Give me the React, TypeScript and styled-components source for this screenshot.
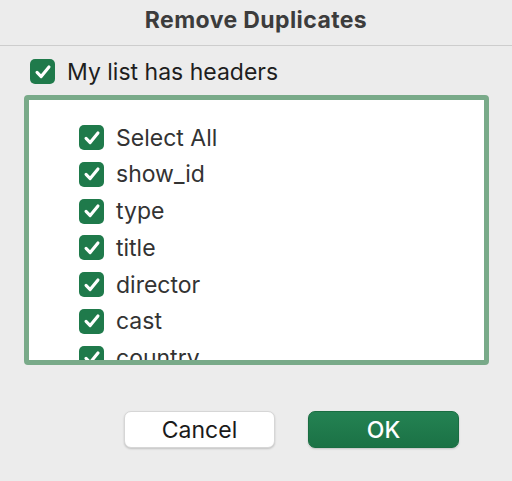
import React, { useState } from 'react';
import styled, { createGlobalStyle } from 'styled-components';

const GlobalStyle = createGlobalStyle`
  html, body {
    margin: 0;
    padding: 0;
    background: #ececec;
  }
  body {
    font-family: Inter, "Liberation Sans", Arial, sans-serif;
  }
`;

const Dialog = styled.div`
  width: 512px;
  height: 481px;
  background: #ececec;
  display: flex;
  flex-direction: column;
  overflow: hidden;
`;

const TitleBar = styled.div`
  height: 46px;
  box-sizing: border-box;
  border-bottom: 1px solid #cdcdcd;
  display: flex;
  align-items: center;
  justify-content: center;
  font-size: 23px;
  font-weight: 700;
  letter-spacing: 0.4px;
  color: #3c3c3c;
  padding-bottom: 5px;
`;

const HeaderRow = styled.label`
  display: flex;
  align-items: center;
  gap: 12px;
  padding: 13px 0 0 30px;
  height: 25px;
  font-size: 23px;
  color: #1e1e1e;
  cursor: default;
`;

const ListBox = styled.div`
  margin: 11px 0 0 24px;
  width: 465px;
  height: 270px;
  box-sizing: border-box;
  border: 5px solid #79aa89;
  border-radius: 4px;
  background: #ffffff;
  overflow: hidden;
  padding: 25px 0 0 50px;
`;

const Item = styled.label`
  display: flex;
  align-items: center;
  gap: 12px;
  height: 25px;
  margin-bottom: 11.8px;
  font-size: 23px;
  color: #333333;
`;

const Box = styled.span<{ $checked: boolean }>`
  width: 25px;
  height: 25px;
  flex: none;
  box-sizing: border-box;
  border-radius: 5px;
  background: ${p => (p.$checked ? '#1f7a4b' : '#ffffff')};
  border: ${p => (p.$checked ? 'none' : '1px solid #b8b8b8')};
  display: flex;
  align-items: center;
  justify-content: center;
`;

const Buttons = styled.div`
  display: flex;
  gap: 33px;
  padding: 46px 0 0 124px;
`;

const Button = styled.button<{ $primary?: boolean }>`
  width: 151px;
  height: 37px;
  border-radius: 7px;
  font-family: Inter, "Liberation Sans", Arial, sans-serif;
  font-size: 23px;
  font-weight: ${p => (p.$primary ? 500 : 400)};
  border: ${p => (p.$primary ? '1px solid #1a6d42' : '1px solid #d6d6d6')};
  background: ${p => (p.$primary ? 'linear-gradient(#248253, #1b7245)' : '#ffffff')};
  color: ${p => (p.$primary ? '#ffffff' : '#1a1a1a')};
  box-shadow: 0 1px 2px rgba(0, 0, 0, 0.18);
  padding: 0;
`;

const Check = ({ checked }: { checked: boolean }) => (
  <Box $checked={checked}>
    {checked && (
      <svg width="22" height="22" viewBox="0 0 24 24">
        <path d="M5.5 12.5 L10 17 L18.5 6.5" fill="none" stroke="#ffffff" strokeWidth="3.4" strokeLinecap="round" strokeLinejoin="round" />
      </svg>
    )}
  </Box>
);

const columns = ['Select All', 'show_id', 'type', 'title', 'director', 'cast', 'country'];

const App = () => {
  const [headers, setHeaders] = useState(true);
  const [checked, setChecked] = useState<boolean[]>(columns.map(() => true));

  const toggle = (i: number) => {
    if (i === 0) {
      const v = !checked[0];
      setChecked(columns.map(() => v));
    } else {
      setChecked(checked.map((c, j) => (j === i ? !c : c)));
    }
  };

  return (
    <Dialog>
      <GlobalStyle />
      <TitleBar>Remove Duplicates</TitleBar>
      <HeaderRow onClick={() => setHeaders(!headers)}>
        <Check checked={headers} />
        My list has headers
      </HeaderRow>
      <ListBox>
        {columns.map((c, i) => (
          <Item key={c} onClick={() => toggle(i)}>
            <Check checked={checked[i]} />
            {c}
          </Item>
        ))}
      </ListBox>
      <Buttons>
        <Button>Cancel</Button>
        <Button $primary>OK</Button>
      </Buttons>
    </Dialog>
  );
};

export default App;
